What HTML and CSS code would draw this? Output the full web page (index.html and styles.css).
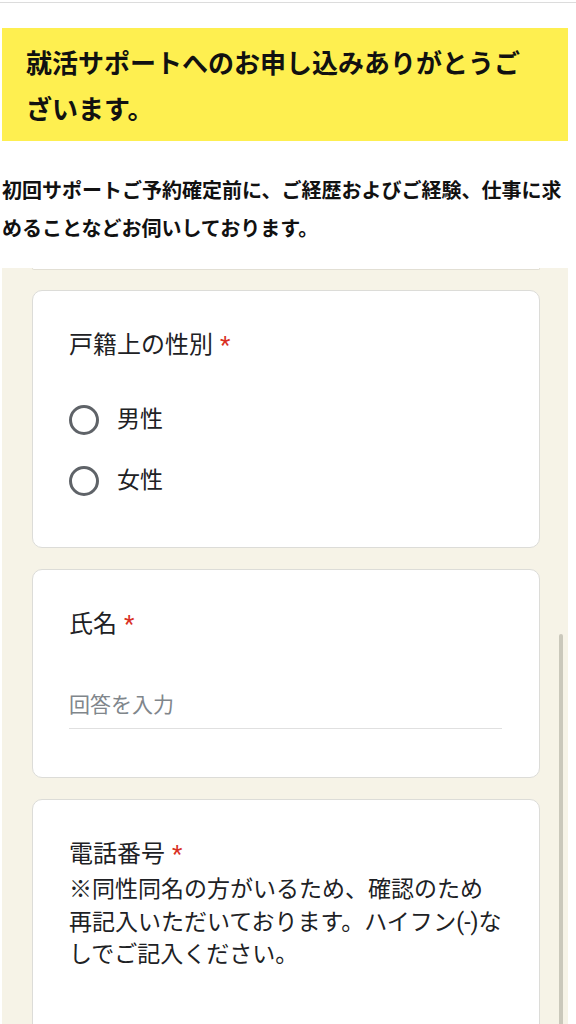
FILE: index.html
```html
<!DOCTYPE html>
<html lang="ja">
<head>
<meta charset="utf-8">
<title>就活サポート お申し込み</title>
<link rel="stylesheet" href="styles.css">
</head>
<body>
<div class="topline"></div>
<main class="page">
  <div class="banner">
    <h1 class="banner-title">就活サポートへのお申し込みありがとうございます。</h1>
  </div>
  <p class="intro">初回サポートご予約確定前に、ご経歴およびご経験、仕事に求めることなどお伺いしております。</p>

  <div class="form-area">
    <div class="card-tail"></div>

    <section class="card card-radio">
      <div class="q-title">戸籍上の性別<span class="req">*</span></div>
      <div class="options">
        <label class="option"><span class="radio"></span><span class="opt-text">男性</span></label>
        <label class="option"><span class="radio"></span><span class="opt-text">女性</span></label>
      </div>
    </section>

    <section class="card card-text">
      <div class="q-title">氏名<span class="req">*</span></div>
      <div class="answer">回答を入力</div>
    </section>

    <section class="card card-text">
      <div class="q-title">電話番号<span class="req">*</span></div>
      <div class="q-desc">※同性同名の方がいるため、確認のため<br>再記入いただいております。ハイフン(-)な<br>しでご記入ください。</div>
      <div class="answer answer-low">回答を入力</div>
    </section>

    <div class="scrollbar"></div>
  </div>
</main>
</body>
</html>
```
FILE: styles.css
```css
html, body {
  margin: 0;
  padding: 0;
  background: #ffffff;
}

body {
  font-family: "Noto Sans CJK JP", "Noto Sans", sans-serif;
  color: #111111;
  overflow: hidden;
}

.topline {
  margin-top: 2px;
  height: 1px;
  background: #dcdcdc;
}

.page {
  margin: 0 8px 0 2px;
}

.banner {
  margin-top: 25px;
  background: #feef50;
  padding: 11px 25px 10px 24px;
}

.banner-title {
  margin: 0;
  font-size: 26px;
  line-height: 46px;
  font-weight: 700;
  color: #111111;
}

.intro {
  margin: 30px 0 0 0;
  font-size: 20px;
  line-height: 38px;
  font-weight: 700;
  color: #111111;
}

.form-area {
  position: relative;
  margin-top: 21px;
  background: #f6f3e7;
  padding: 0 28px 60px 30px;
  display: flex;
  flex-direction: column;
  gap: 21px;
}

.card-tail {
  height: 1px;
  margin-bottom: -1px;
  border: 1px solid #e2dfd4;
  border-top: none;
  border-radius: 0 0 10px 10px;
  background: #ffffff;
}

.card {
  background: #ffffff;
  border: 1px solid #dcdcd8;
  border-radius: 10px;
  padding: 38px 36px 42px 36px;
  font-family: Roboto, "Noto Sans CJK JP", sans-serif;
  color: #202124;
}

.card-text {
  padding-bottom: 48px;
}

.q-title {
  font-size: 24px;
  line-height: 32px;
  color: #202124;
}

.req {
  color: #d93025;
  margin-left: 7px;
  font-size: 24px;
}

.options {
  margin-top: 35px;
  display: flex;
  flex-direction: column;
  gap: 13px;
}

.option {
  display: flex;
  align-items: center;
  height: 48px;
}

.radio {
  box-sizing: border-box;
  width: 30px;
  height: 30px;
  border: 3px solid #5f6368;
  border-radius: 50%;
  flex: none;
}

.opt-text {
  margin-left: 18px;
  font-size: 23px;
  line-height: 32px;
  color: #202124;
}

.answer {
  margin-top: 50px;
  width: 433px;
  font-size: 21px;
  line-height: 30px;
  padding-bottom: 8px;
  color: #80868b;
  border-bottom: 1px solid #e0e0e0;
}

.answer-low {
  margin-top: 50px;
}

.q-desc {
  margin-top: 4px;
  font-size: 23px;
  line-height: 32.5px;
  color: #202124;
  white-space: nowrap;
}

.scrollbar {
  position: absolute;
  right: 5px;
  top: 366px;
  width: 4px;
  height: 700px;
  border-radius: 2px;
  background: #cac8bb;
}
```
